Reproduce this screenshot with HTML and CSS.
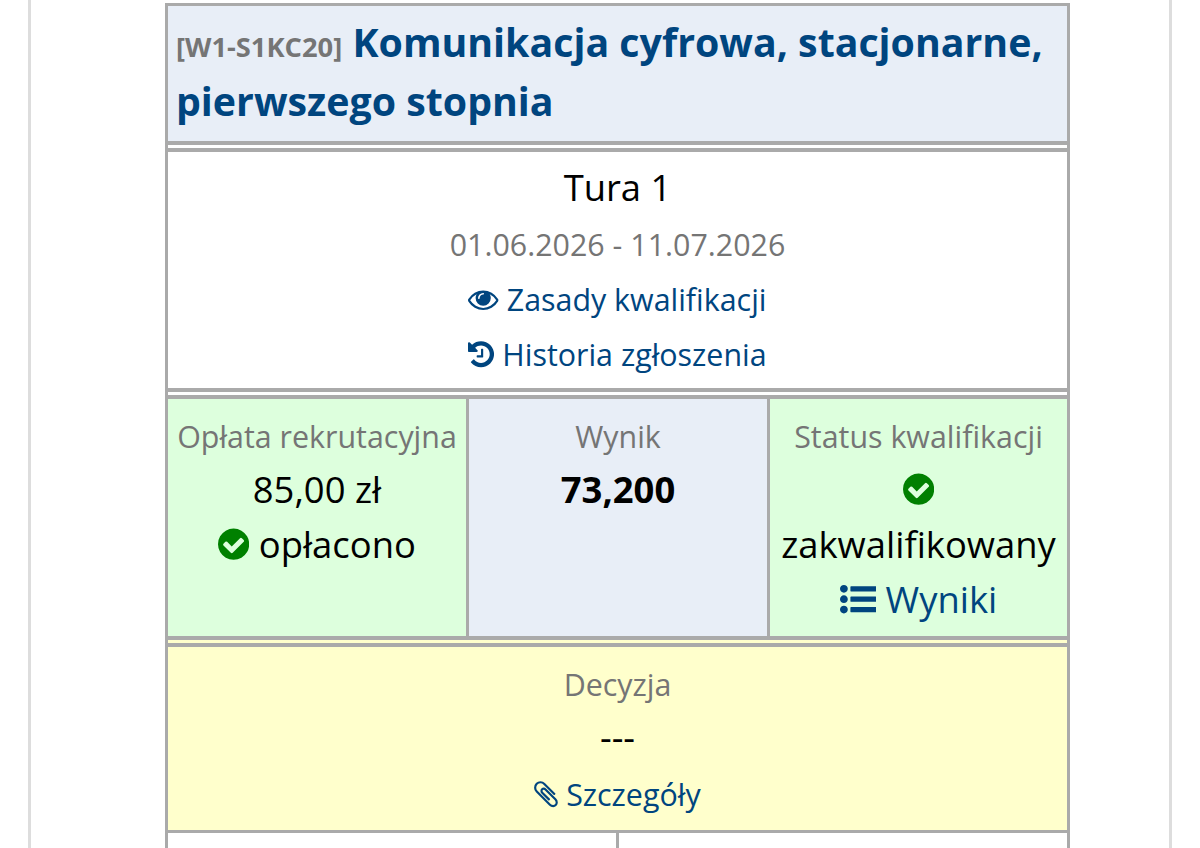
FILE: index.html
```html
<!DOCTYPE html>
<html lang="pl">
<head>
    <meta charset="UTF-8">
    <meta name="viewport" content="width=device-width, initial-scale=1.0">
    <title>Komunikacja cyfrowa</title>
    <link rel="stylesheet" href="styles.css">
</head>
<body>
<div class="page">
    <div class="card">
        <div class="card-title">
            <span class="code">[W1-S1KC20]</span> <a class="title-link">Komunikacja cyfrowa, stacjonarne, pierwszego stopnia</a>
        </div>
        <div class="row row-info">
            <div class="cell">
                <div class="line value">Tura 1</div>
                <div class="line label">01.06.2026 - 11.07.2026</div>
                <div class="line"><a class="link"><svg class="icon" viewBox="0 0 1792 1792"><path d="M1664 960q-152-236-381-353 61 104 61 225 0 185-131.5 316.5t-316.5 131.5-316.5-131.5-131.5-316.5q0-121 61-225-229 117-381 353 133 205 333.5 326.5t434.5 121.5 434.5-121.5 333.5-326.5zm-720-384q0-20-14-34t-34-14q-125 0-214.5 89.5t-89.5 214.5q0 20 14 34t34 14 34-14 14-34q0-86 61-147t147-61q20 0 34-14t14-34zm848 384q0 34-20 69-140 230-376.5 368.5t-499.5 138.5-499.5-139-376.5-368q-20-35-20-69t20-69q140-229 376.500-368t499.500-139 499.500 139 376.500 368q20 35 20 69z"/></svg> Zasady kwalifikacji</a></div>
                <div class="line"><a class="link"><svg class="icon" viewBox="128 0 1536 1792"><path d="M1664 896q0 156-61 298t-164 245-245 164-298 61q-172 0-327-72.5t-264-204.5q-7-10-6.500-22.500t8.500-20.500l137-138q10-9 25-9 16 2 23 12 73 95 179 147t225 52q104 0 198.500-40.500t163.500-109.500 109.500-163.500 40.500-198.500-40.500-198.500-109.500-163.500-163.500-109.500-198.500-40.500q-98 0-188 35.500t-160 101.500l137 138q31 30 14 69-17 40-59 40h-448q-26 0-45-19t-19-45v-448q0-42 40-59 39-17 69 14l130 129q107-101 244.500-156.500t284.500-55.500q156 0 298 61t245 164 164 245 61 298zm-640-288v448q0 14-9 23t-23 9h-320q-14 0-23-9t-9-23v-64q0-14 9-23t23-9h224v-352q0-14 9-23t23-9h64q14 0 23 9t9 23z"/></svg> Historia zgłoszenia</a></div>
            </div>
        </div>
        <div class="row row-stats">
            <div class="cell cell-ok">
                <div class="line label">Opłata rekrutacyjna</div>
                <div class="line value">85,00 zł</div>
                <div class="line value"><svg class="icon icon-ok" viewBox="128 0 1536 1792"><path fill-rule="evenodd" d="M1412 734q0-28-18-46l-91-90q-19-19-45-19t-45 19l-408 407-226-226q-19-19-45-19t-45 19l-91 90q-18 18-18 46 0 27 18 45l362 362q19 19 45 19 27 0 46-19l543-543q18-18 18-45zm252 162q0 209-103 385.5t-279.500 279.500-385.500 103-385.500-103-279.500-279.500-103-385.500 103-385.500 279.500-279.500 385.500-103 385.500 103 279.500 279.500 103 385.500z"/></svg> opłacono</div>
            </div>
            <div class="cell cell-plain">
                <div class="line label">Wynik</div>
                <div class="line value"><strong>73,200</strong></div>
            </div>
            <div class="cell cell-ok">
                <div class="line label">Status kwalifikacji</div>
                <div class="line value"><svg class="icon icon-ok" viewBox="128 0 1536 1792"><path fill-rule="evenodd" d="M1412 734q0-28-18-46l-91-90q-19-19-45-19t-45 19l-408 407-226-226q-19-19-45-19t-45 19l-91 90q-18 18-18 46 0 27 18 45l362 362q19 19 45 19 27 0 46-19l543-543q18-18 18-45zm252 162q0 209-103 385.5t-279.500 279.500-385.500 103-385.500-103-279.500-279.500-103-385.500 103-385.500 279.500-279.500 385.500-103 385.500 103 279.500 279.500 103 385.500z"/></svg></div>
                <div class="line value">zakwalifikowany</div>
                <div class="line value"><a class="link"><svg class="icon" viewBox="0 0 1792 1792"><path d="M384 1408q0 80-56 136t-136 56-136-56-56-136 56-136 136-56 136 56 56 136zm0-512q0 80-56 136t-136 56-136-56-56-136 56-136 136-56 136 56 56 136zm1408 416v192q0 13-9.5 22.5t-22.5 9.5h-1216q-13 0-22.5-9.5t-9.5-22.5v-192q0-13 9.5-22.5t22.5-9.5h1216q13 0 22.5 9.5t9.5 22.5zm-1408-928q0 80-56 136t-136 56-136-56-56-136 56-136 136-56 136 56 56 136zm1408 416v192q0 13-9.5 22.5t-22.5 9.5h-1216q-13 0-22.5-9.5t-9.5-22.5v-192q0-13 9.5-22.5t22.5-9.5h1216q13 0 22.5 9.5t9.5 22.5zm0-512v192q0 13-9.5 22.5t-22.5 9.5h-1216q-13 0-22.5-9.5t-9.5-22.5v-192q0-13 9.5-22.5t22.5-9.5h1216q13 0 22.5 9.5t9.5 22.5z"/></svg> Wyniki</a></div>
            </div>
        </div>
        <div class="row row-decision">
            <div class="cell">
                <div class="line label">Decyzja</div>
                <div class="line value">---</div>
                <div class="line"><a class="link"><svg class="icon" viewBox="192 0 1408 1792"><path d="M1596 1385q0 117-79 196t-196 79q-135 0-235-100l-777-776q-113-115-113-271 0-159 110-270t269-111q158 0 273 113l605 606q10 10 10 22 0 16-30.500 46.500t-46.500 30.500q-13 0-23-10l-606-607q-79-77-181-77-106 0-179 75t-73 181q0 105 76 181l776 777q63 63 145 63 64 0 106-42t42-106q0-82-63-145l-581-581q-26-24-60-24-29 0-48 19t-19 48q0 32 25 59l410 410q10 10 10 22 0 16-31 47t-47 31q-12 0-22-10l-410-410q-63-61-63-149 0-82 57-139t139-57q88 0 149 63l581 581q100 98 100 235z"/></svg> Szczegóły</a></div>
            </div>
        </div>
        <div class="row-bottom">
            <div class="cell"></div>
            <div class="cell"></div>
        </div>
    </div>
</div>
</body>
</html>
```

FILE: styles.css
```css
body {
    font-family: 'Open Sans', 'Noto Sans', sans-serif;
    margin: 0;
    padding: 0;
    height: 848px;
    overflow: hidden;
    background: white;
    color: black;
}

.page {
    box-sizing: border-box;
    width: 1144px;
    height: 848px;
    margin-left: 28px;
    padding-top: 3px;
    border-left: 3px solid #ddd;
    border-right: 3px solid #ddd;
}

.card {
    box-sizing: border-box;
    width: 905px;
    margin-left: 134px;
    border: 3px solid #aaa;
    border-bottom: none;
}

.card-title {
    height: 135px;
    padding: 7px 8px 0 8px;
    box-sizing: border-box;
    background: #e8eef7;
    font-size: 39.3px;
    line-height: 59px;
    font-weight: bold;
    color: #00457f;
}

.code {
    font-size: 27.3px;
    line-height: 1;
    color: #757575;
}

.row {
    border-top: 11px double #aaa;
}

.row-info {
    background: white;
}

.row-info .cell {
    padding-bottom: 6px;
}

.row-stats {
    display: grid;
    grid-template-columns: 298px 1fr 300px;
}

.row-decision {
    background: #ffc;
}

.row-decision .cell {
    padding-bottom: 8px;
}

.row-bottom {
    display: grid;
    grid-template-columns: 448px 1fr;
    height: 40px;
    border-top: 3px solid #aaa;
}

.row-bottom .cell + .cell {
    border-left: 3px solid #aaa;
}

.cell {
    text-align: center;
    padding: 10px 0 7px;
    font-size: 30.4px;
}

.row-stats .cell + .cell {
    border-left: 3px solid #aaa;
}

.cell-ok {
    background: #dfd;
}

.cell-plain {
    background: #e8eef7;
}

.line {
    height: 55px;
    line-height: 55px;
    white-space: nowrap;
}

.label {
    color: #757575;
}

.line.value {
    font-size: 36.4px;
    line-height: 50px;
}

.link {
    color: #00457f;
}

.icon {
    height: 1em;
    fill: currentColor;
    vertical-align: -0.125em;
}

.icon-ok {
    fill: #008000;
}
```
